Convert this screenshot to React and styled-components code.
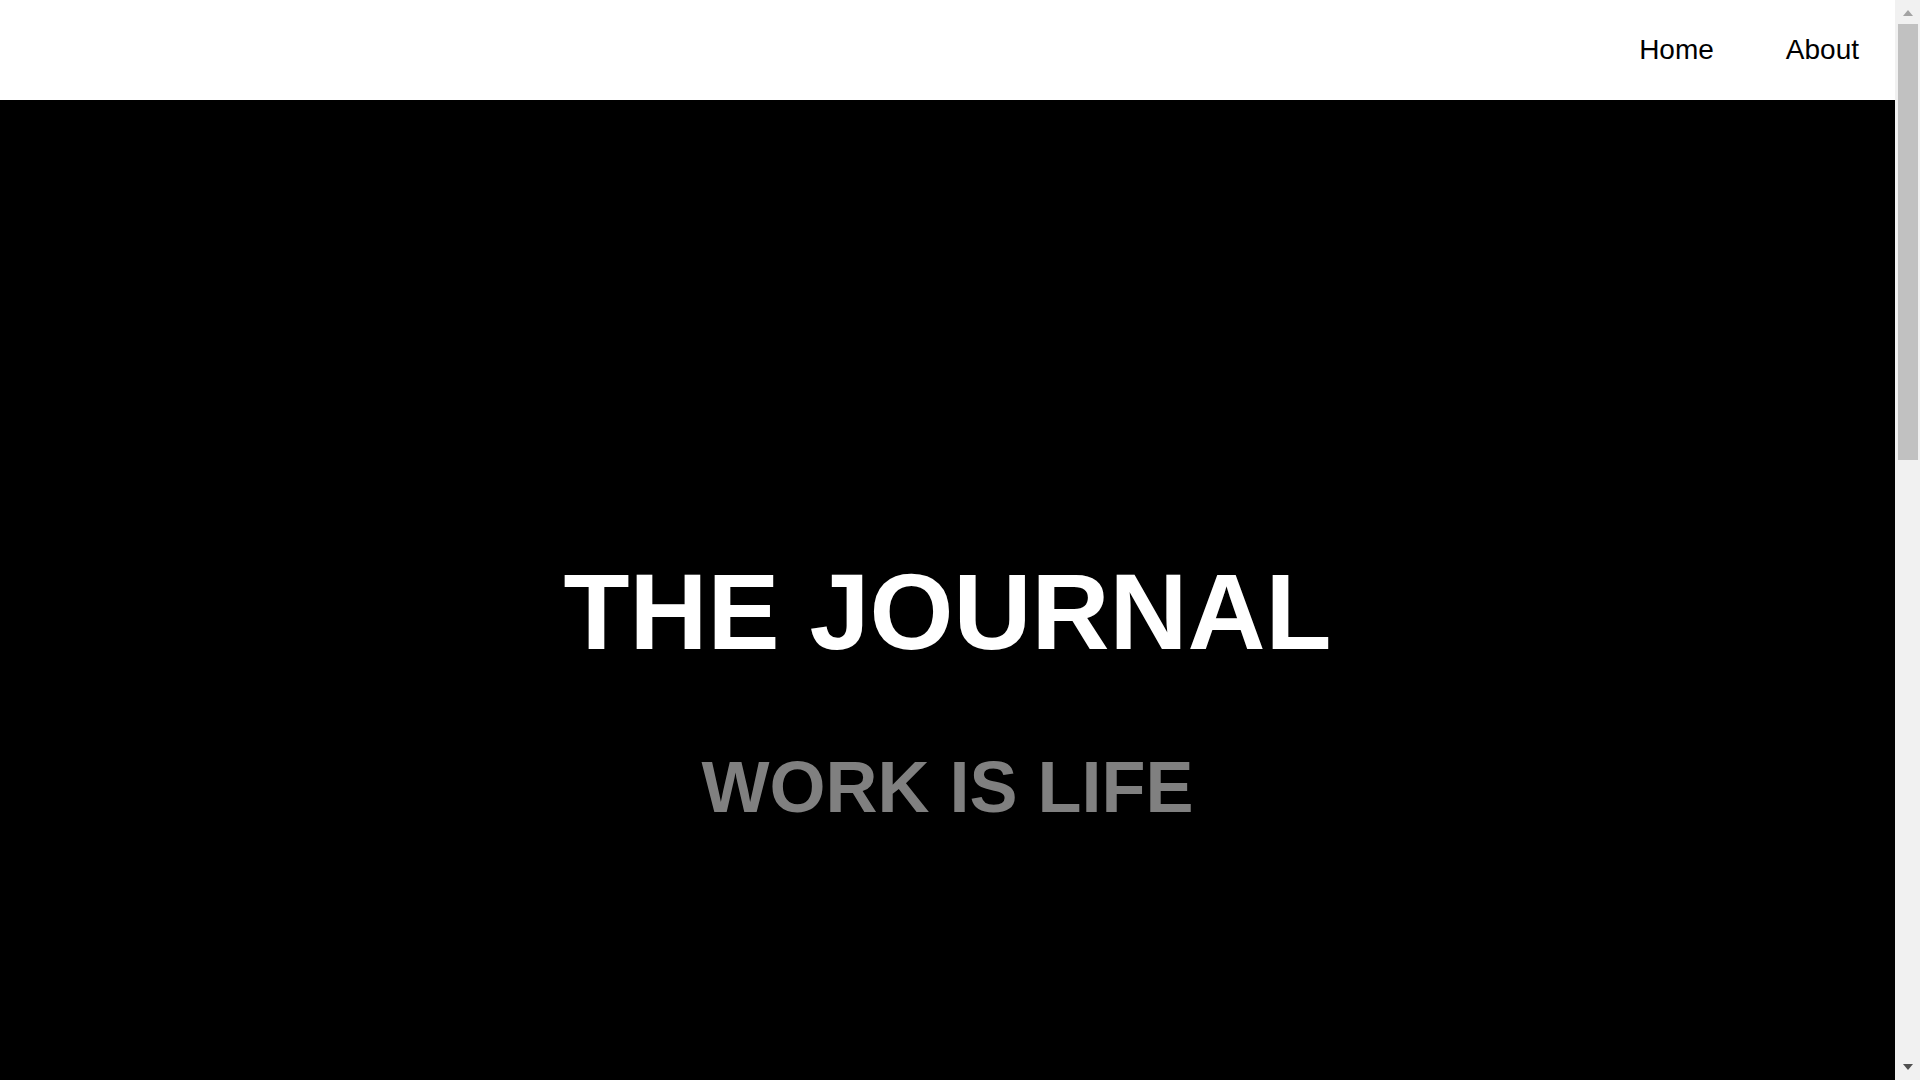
import React from "react";
import styled, { createGlobalStyle } from "styled-components";

const GlobalStyle = createGlobalStyle`
  html, body {
    margin: 0;
    padding: 0;
    background: #ffffff;
    font-family: "Liberation Sans", Arial, sans-serif;
  }
  * { box-sizing: border-box; }
`;

const Page = styled.div`
  margin-right: 25px;
`;

const NavBar = styled.nav`
  height: 100px;
  background: #ffffff;
  display: flex;
  justify-content: flex-end;
  align-items: center;
`;

const NavLink = styled.a`
  padding: 0 36px;
  font-size: 28px;
  line-height: normal;
  color: #000000;
  text-decoration: none;
  cursor: pointer;
`;

const Hero = styled.section`
  background: #000000;
  min-height: 2542px;
  padding-top: 449px;
  text-align: center;
`;

const Title = styled.h1`
  margin: 0;
  font-size: 108px;
  font-weight: 700;
  line-height: normal;
  color: #ffffff;
`;

const Subtitle = styled.h2`
  margin: 72px 0 0;
  font-size: 72px;
  font-weight: 700;
  line-height: normal;
  color: #808080;
`;

/* Browser-style scrollbar drawn over the right edge of the window */
const ScrollBar = styled.div`
  position: fixed;
  top: 0;
  right: 0;
  width: 25px;
  height: 100vh;
  background: #f1f1f1;
  display: flex;
  flex-direction: column;
`;

const ScrollButton = styled.div`
  height: 24px;
  flex: none;
  display: flex;
  justify-content: center;
  align-items: ${(p) => (p.$down ? "flex-start" : "flex-end")};
  padding: ${(p) => (p.$down ? "8px 0 0" : "0 0 8px")};
`;

const Arrow = styled.span`
  width: 0;
  height: 0;
  border-left: 5.5px solid transparent;
  border-right: 5.5px solid transparent;
  ${(p) =>
    p.$down
      ? "border-top: 6px solid #505050;"
      : "border-bottom: 6px solid #a3a3a3;"}
`;

const Track = styled.div`
  flex: 1;
  padding: 0 2px 0 3px;
`;

const Thumb = styled.div`
  height: 436px;
  background: #c1c1c1;
`;

export default function App() {
  return (
    <>
      <GlobalStyle />
      <Page>
        <NavBar>
          <NavLink>Home</NavLink>
          <NavLink>About</NavLink>
        </NavBar>
        <Hero>
          <Title>THE JOURNAL</Title>
          <Subtitle>WORK IS LIFE</Subtitle>
        </Hero>
      </Page>
      <ScrollBar aria-hidden="true">
        <ScrollButton>
          <Arrow />
        </ScrollButton>
        <Track>
          <Thumb />
        </Track>
        <ScrollButton $down>
          <Arrow $down />
        </ScrollButton>
      </ScrollBar>
    </>
  );
}
